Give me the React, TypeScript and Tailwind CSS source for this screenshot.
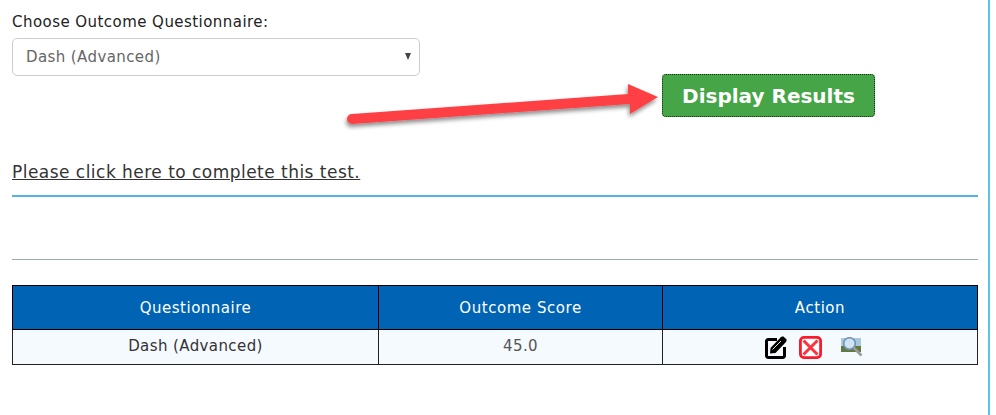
export default function App() {
  return (
    <div className="relative h-[415px] w-[996px] overflow-hidden bg-white font-['DejaVu_Sans',sans-serif] text-[#333]">
      <div className="h-[415px] w-[990px] border-r-2 border-[#5cc3e4]">
        <div className="w-[978px] pl-3">
          <div className="pt-[12px] text-[15px] leading-[20px] tracking-[0.45px] text-[#222]">Choose Outcome Questionnaire:</div>
          <div className="relative mt-[6px] flex h-[38px] w-[408px] items-center rounded-[5px] border border-[#ccc] bg-white pl-[13px] text-[15px] tracking-[0.4px] text-[#666]">
            Dash (Advanced)
            <span className="absolute right-[8px] top-[14px] h-0 w-0 border-x-[3.5px] border-t-[7px] border-x-transparent border-t-[#444]" />
          </div>
          <div className="mt-[-2px] flex justify-end pr-[103px]">
            <button className="h-[43px] w-[213px] rounded-[4px] border border-dotted border-[#0a300a] bg-[#46a546] text-[20px] font-bold leading-none text-white">
              Display Results
            </button>
          </div>
          <a className="mt-[43px] block w-fit text-[17px] leading-[25px] tracking-[0.47px] text-[#333] underline">Please click here to complete this test.</a>
          <div className="mt-[10px] h-[2px] w-[966px] bg-[#55b3dc]" />
          <div className="mt-[62px] h-px w-[966px] bg-[#9fa9b0]" />
          <table className="mt-[25px] w-[966px] table-fixed border-collapse text-center text-[15px] tracking-[0.4px]">
            <thead>
              <tr className="h-[44px] bg-[#0063b3] text-white">
                <th className="w-[366px] border border-black pt-[2px] font-normal tracking-[0.5px]">Questionnaire</th>
                <th className="w-[284px] border border-black pt-[2px] font-normal tracking-[0.55px]">Outcome Score</th>
                <th className="border border-black pt-[2px] font-normal tracking-[0.55px]">Action</th>
              </tr>
            </thead>
            <tbody>
              <tr className="h-[35px] bg-[#f5faff]">
                <td className="border border-[#222] pb-[2px]">Dash (Advanced)</td>
                <td className="border border-[#222] pb-[2px] text-[#555]">45.0</td>
                <td className="border border-[#222]">
                  <div className="flex items-center justify-start gap-[12px] pl-[102px]">
                    <svg width="22" height="23" viewBox="0 0 22 23">
                      <path d="M12 3.5H3.2A1.7 1.7 0 0 0 1.5 5.2v14.6a1.7 1.7 0 0 0 1.7 1.7h14.6a1.7 1.7 0 0 0 1.7-1.7V11" fill="none" stroke="#000" strokeWidth="3" />
                      <path d="M5.5 12 15.5 1.5l1.5-1h1.5l3 3v1.5l-1 1.5L10.5 17 5 17.5z" fill="#000" />
                      <path d="M7.5 13.5 16 5" stroke="#fff" strokeWidth="0.9" />
                    </svg>
                    <svg width="23" height="23" viewBox="0 0 23 23">
                      <rect x="1.4" y="1.4" width="20.2" height="20.2" rx="3.5" fill="#fff" stroke="#fb1a2a" strokeWidth="2.8" />
                      <path d="M4.5 4.5 18.5 18.5M18.5 4.5 4.5 18.5" stroke="#f8343e" strokeWidth="3" />
                    </svg>
                    <svg className="ml-[7px]" width="22" height="20" viewBox="0 0 22 20">
                      <rect x="0" y="1" width="20" height="14" fill="#a9c9dc" />
                      <rect x="0" y="9" width="20" height="6" fill="#63793f" />
                      <circle cx="8.5" cy="6.5" r="5.8" fill="#cfe3f3" stroke="#6f93b4" strokeWidth="1.6" />
                      <path d="M12.5 10.5 20.5 18.5" stroke="#9a9a9a" strokeWidth="2.6" />
                    </svg>
                  </div>
                </td>
              </tr>
            </tbody>
          </table>
        </div>
      </div>
      <svg className="pointer-events-none absolute left-[340px] top-[75px]" width="325" height="60" viewBox="0 0 325 60">
        <defs>
          <filter id="s" x="-5%" y="-50%" width="110%" height="220%">
            <feDropShadow dx="-1" dy="3" stdDeviation="2" floodColor="#000" floodOpacity="0.45" />
          </filter>
        </defs>
        <path d="M12 49 L290 29 L290 39 L318 22 L288 9 L288 19 L12 39 a5 5 0 0 0 0 10z" fill="#fe4145" filter="url(#s)" />
      </svg>
    </div>
  );
}
